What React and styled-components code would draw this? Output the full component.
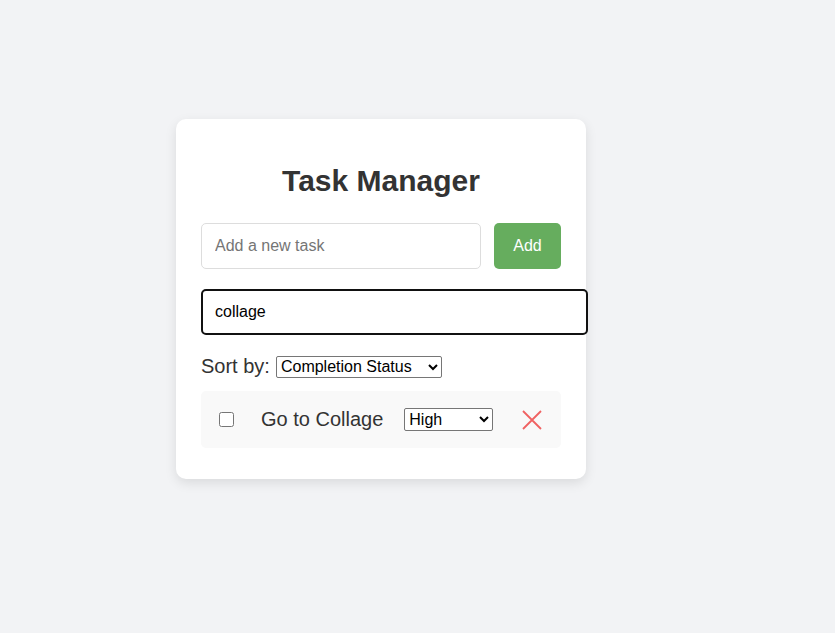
import React, { useState } from 'react';
import styled, { createGlobalStyle } from 'styled-components';

const GlobalStyle = createGlobalStyle`
    html, body {
        margin: 0;
        padding: 0;
        background-color: #f2f3f5;
        font-family: 'Liberation Sans', Arial, sans-serif;
    }
`

export default function App() {
    const [search, setSearch] = useState('collage');
    return(
        <Page>
            <GlobalStyle />
            <Card>
                <Title>Task Manager</Title>
                <AddRow>
                    <TaskInput placeholder="Add a new task" />
                    <AddButton>Add</AddButton>
                </AddRow>
                <SearchInput value={search} onChange={(e) => setSearch(e.target.value)} />
                <SortRow>
                    <span>Sort by:</span>
                    <SortSelect defaultValue="status">
                        <option value="status">Completion Status</option>
                        <option value="priority">Priority</option>
                    </SortSelect>
                </SortRow>
                <TaskItem>
                    <Check type="checkbox" />
                    <TaskText>Go to Collage</TaskText>
                    <PrioritySelect defaultValue="High">
                        <option>High</option>
                        <option>Medium</option>
                        <option>Low</option>
                    </PrioritySelect>
                    <DeleteButton aria-label="delete">
                        <svg width="20" height="20" viewBox="0 0 20 20">
                            <path d="M1 1 L19 19 M19 1 L1 19" stroke="#f06262" strokeWidth="1.8" fill="none" />
                        </svg>
                    </DeleteButton>
                </TaskItem>
            </Card>
        </Page>
    )
};

const Page = styled.div`
    min-height: 633px;
    padding: 119px 0 0 176px;
    box-sizing: border-box;
`

const Card = styled.div`
    width: 410px;
    box-sizing: border-box;
    padding: 20px 25px 31px 25px;
    background-color: white;
    border-radius: 10px;
    box-shadow: 0 4px 12px rgba(0, 0, 0, 0.1);
`

const Title = styled.h1`
    margin: 24px 0 25px 0;
    text-align: center;
    font-size: 30px;
    line-height: 35px;
    font-weight: bold;
    color: #333;
`

const AddRow = styled.div`
    display: flex;
    gap: 13px;
    margin-bottom: 20px;
`

const TaskInput = styled.input`
    flex: 1;
    height: 46px;
    box-sizing: border-box;
    padding: 0 13px;
    border: 1px solid #ddd;
    border-radius: 5px;
    font-family: 'Liberation Sans', Arial, sans-serif;
    font-size: 16px;
    outline: none;
    &::placeholder {
        color: #757575;
    }
`

const AddButton = styled.button`
    width: 67px;
    height: 46px;
    border: none;
    border-radius: 5px;
    background-color: #66ad5e;
    color: white;
    font-family: 'Liberation Sans', Arial, sans-serif;
    font-size: 16px;
    cursor: pointer;
`

const SearchInput = styled.input`
    display: block;
    width: 387px;
    height: 46px;
    box-sizing: border-box;
    padding: 0 12px;
    border: 2px solid #111;
    border-radius: 5px;
    font-family: 'Liberation Sans', Arial, sans-serif;
    font-size: 16px;
    color: black;
    outline: none;
    margin-bottom: 20px;
`

const SortRow = styled.div`
    display: flex;
    align-items: center;
    gap: 6px;
    margin-bottom: 13px;
    font-size: 20px;
    color: #333;
`

const SortSelect = styled.select`
    height: 22px;
    width: 166px;
    font-family: 'Liberation Sans', Arial, sans-serif;
    font-size: 16px;
    color: black;
    background: white;
    border: 1px solid #767676;
    border-radius: 2px;
`

const TaskItem = styled.div`
    display: flex;
    align-items: center;
    height: 57px;
    padding: 0 18px;
    background-color: #f9f9f9;
    border-radius: 5px;
`

const Check = styled.input`
    width: 15px;
    height: 15px;
    margin: 0 27px 0 0;
`

const TaskText = styled.span`
    font-size: 20px;
    color: #333;
    margin-right: 21px;
`

const PrioritySelect = styled.select`
    width: 89px;
    height: 23px;
    font-family: 'Liberation Sans', Arial, sans-serif;
    font-size: 16px;
    color: black;
    background: white;
    border: 1px solid #767676;
    border-radius: 2px;
`

const DeleteButton = styled.button`
    margin-left: 29px;
    padding: 0;
    border: none;
    background: none;
    display: flex;
    cursor: pointer;
`
